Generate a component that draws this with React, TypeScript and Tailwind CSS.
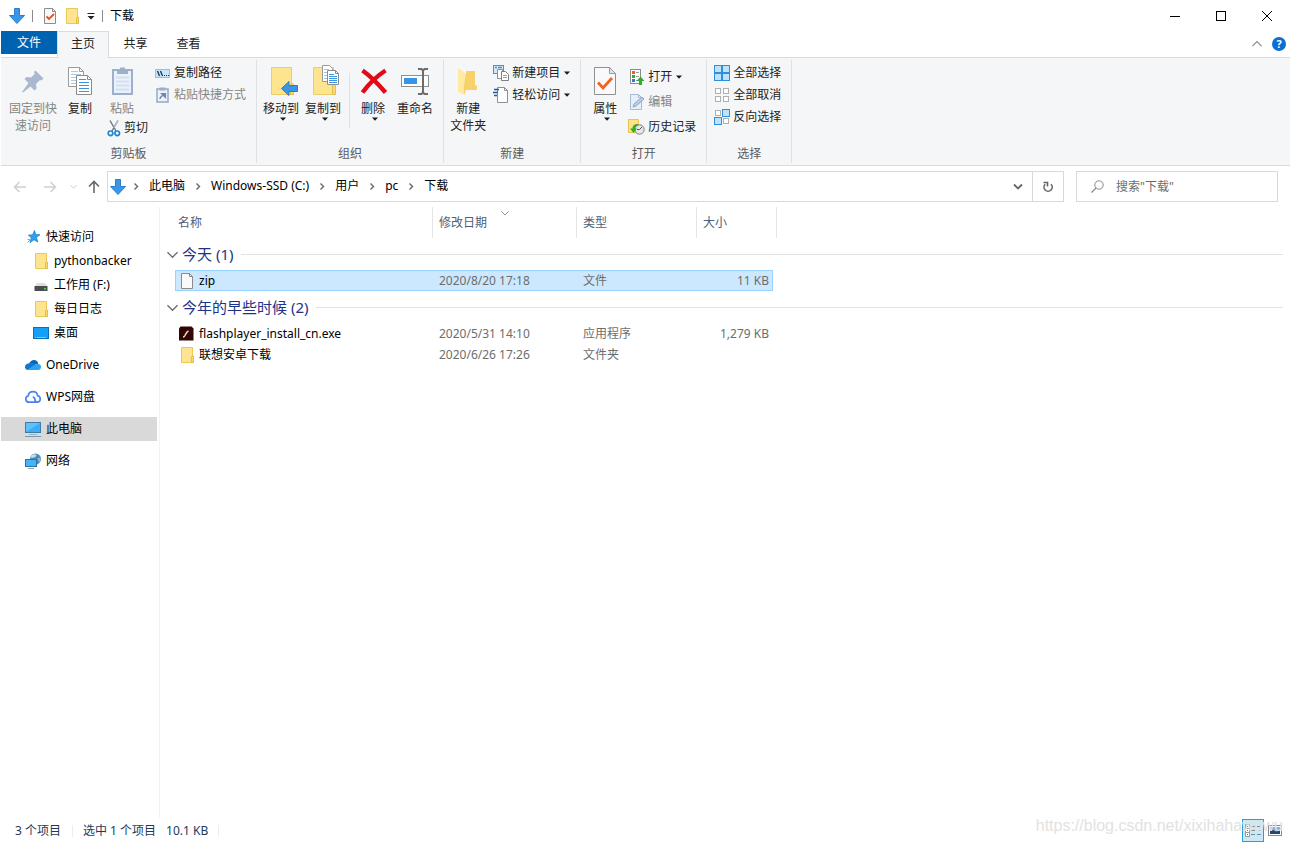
import type { ReactNode } from 'react';

/* ---------- icons ---------- */

function DownArrow() {
  return (
    <svg width="16" height="16" viewBox="0 0 16 16">
      <path d="M5.5 0.5h5v7h5L8 15.5 0.5 7.5h5z" fill="#3a96e8" stroke="#2b7fc9" />
    </svg>
  );
}

function FolderIcon() {
  return (
    <svg width="16" height="16" viewBox="0 0 16 16">
      <path d="M2.5 0.5h11v9h1v6h-12z" fill="#ffe48f" stroke="#ecc854" />
      <path d="M12.5 15.5V10l1-1h1v6.5z" fill="#f8d775" stroke="#e6bd45" />
    </svg>
  );
}

function FileIcon() {
  return (
    <svg width="16" height="16" viewBox="0 0 16 16">
      <path d="M2.5 0.5h8l3 3v12h-11z" fill="#fafafa" stroke="#8a8a8a" />
      <path d="M10.5 0.5v3h3" fill="none" stroke="#8a8a8a" />
    </svg>
  );
}

function CheckedPage({ small = false }: { small?: boolean }) {
  return small ? (
    <svg width="14" height="16" viewBox="0 0 14 16">
      <path d="M1.5 0.5h8l3 3v12h-11z" fill="#f8f8fa" stroke="#8c8c8c" />
      <path d="M9.5 0.5v3h3" fill="none" stroke="#8c8c8c" />
      <path d="M3.5 8.5l2.5 2.5 5-5" fill="none" stroke="#e8501c" strokeWidth="1.8" />
    </svg>
  ) : (
    <svg width="32" height="32" viewBox="0 0 32 32">
      <path d="M5.5 1.5h15l6 6v21h-21z" fill="#f9f9fb" stroke="#8f8f8f" />
      <path d="M20.5 1.5v6h6z" fill="#e4e4e8" stroke="#9a9a9a" />
      <path d="M9 16.500l5 5.500 9-10" fill="none" stroke="#f0641e" strokeWidth="2.800" />
    </svg>
  );
}

function PinIcon() {
  return (
    <svg width="32" height="32" viewBox="0 0 32 32">
      <path
        d="M18.500 4.500l8 8-2 2-1.500-.5-4 4 .5 4.500-2 2-4-4L6 26.500l-.8-.8L11.500 17l-4-4 2-2 4.500.5 4-4-1.200-1.500z"
        fill="#a9b8cf"
      />
    </svg>
  );
}

function CopyIcon() {
  return (
    <svg width="32" height="32" viewBox="0 0 32 32">
      <path d="M4.500 1.500h11l4 4v15h-15z" fill="#fff" stroke="#9a9a9a" />
      <path d="M15.500 1.500v4h4" fill="none" stroke="#9a9a9a" />
      <path d="M7 5.500h7M7 8.500h10M7 11.500h10M7 14.500h10M7 17.500h10" stroke="#a9cbea" />
      <path d="M12.500 9.500h11l4 4v15h-15z" fill="#fff" stroke="#8c8c8c" />
      <path d="M23.500 9.500v4h4" fill="none" stroke="#8c8c8c" />
      <path d="M15 13.500h7M15 16.500h10M15 19.500h10M15 22.500h10M15 25.500h10" stroke="#3b94dd" />
    </svg>
  );
}

function PasteIcon() {
  return (
    <svg width="32" height="32" viewBox="0 0 32 32">
      <rect x="7" y="4" width="19" height="24" fill="#eaf1fb" stroke="#9dafcb" strokeWidth="2" />
      <path d="M10 11.500h13M10 15.500h13M10 19.500h13M10 23.500h13" stroke="#d3dff1" strokeWidth="2" />
      <path d="M11 4h3V1.500h5V4h3v4H11z" fill="#9dafcb" />
    </svg>
  );
}

function CutIcon() {
  return (
    <svg width="14" height="17" viewBox="0 0 14 17">
      <path d="M3 0.500L9 11M11 0.500L5 11" stroke="#6d7b88" strokeWidth="1.500" />
      <path d="M7 8l4-7.500" stroke="#c3ccd4" />
      <circle cx="3.500" cy="13.300" r="2.300" fill="#fff" stroke="#1a86d8" strokeWidth="1.700" />
      <circle cx="10.200" cy="13.300" r="2.300" fill="#fff" stroke="#1a86d8" strokeWidth="1.700" />
    </svg>
  );
}

function PathIcon() {
  return (
    <svg width="16" height="16" viewBox="0 0 16 16">
      <rect x="0.500" y="4.500" width="14" height="8" fill="#c8e6fb" stroke="#8fc2ea" />
      <path d="M2.500 6l2 5M5.500 6l2 5" stroke="#15354f" strokeWidth="1.300" />
      <path d="M9 10.500h1M11 10.500h1M13 10.500h1" stroke="#15354f" />
    </svg>
  );
}

function ShortcutIcon() {
  return (
    <svg width="16" height="16" viewBox="0 0 16 16">
      <rect x="2" y="2" width="11" height="13" fill="#edf2fa" stroke="#9badc9" strokeWidth="1.600" />
      <path d="M4.500 0.500h6v3h-6z" fill="#9badc9" />
      <path d="M5 12c0-2 1-3 3-3.500M6.500 6.500h4v4z" stroke="#7088ad" strokeWidth="1.200" fill="#7088ad" />
    </svg>
  );
}

function BigFolder({ children }: { children: ReactNode }) {
  return (
    <svg width="32" height="32" viewBox="-1 0 32 32" className="overflow-visible">
      <path d="M5.500 1.500h20v17h2v10h-22z" fill="#fde48f" stroke="#edcd68" />
      <path d="M24.500 28.500V19l1.500-2 1.500 1.500v10z" fill="#f9d977" stroke="#e5bf4e" />
      {children}
    </svg>
  );
}

function MoveToIcon() {
  return (
    <BigFolder>
      <path d="M15.500 22.500l7.500-7v4h8.500v6H23v4z" fill="#3b97e4" stroke="#2a7cc5" />
    </BigFolder>
  );
}

function CopyToIcon() {
  return (
    <BigFolder>
      <path d="M14.500 -0.500h7l3 3v13h-10z" fill="#fff" stroke="#999" />
      <path d="M16 3.500h5M16 6.500h6M16 9.500h6M16 12.500h6" stroke="#9fc6ea" />
      <path d="M19.500 4.500h8l3 3v11h-11z" fill="#fff" stroke="#8c8c8c" />
      <path d="M27.500 4.500v3h3" fill="none" stroke="#8c8c8c" />
      <path d="M21 8.500h5M21 10.500h8M21 12.500h8M21 14.500h8M21 16.500h8" stroke="#3b94dd" />
    </BigFolder>
  );
}

function DeleteIcon() {
  return (
    <svg width="32" height="32" viewBox="0 0 32 32">
      <path d="M5.500 4.500C12 9 22 19 28.500 26.500M28.500 4.500C20 10 11 19 5.500 26.500" fill="none" stroke="#e20a17" strokeWidth="4.400" />
    </svg>
  );
}

function RenameIcon() {
  return (
    <svg width="32" height="32" viewBox="0 0 32 32">
      <rect x="2.500" y="9.500" width="27" height="11" fill="#fff" stroke="#8f8f8f" />
      <rect x="5" y="12" width="13" height="6" fill="#3595e6" />
      <path d="M24 4v23M19 3h3.500L24 4.500 25.500 3H29M19 28h3.500L24 26.500l1.500 1.500H29" fill="none" stroke="#6c6c6c" strokeWidth="2" />
    </svg>
  );
}

function NewFolderIcon() {
  return (
    <svg width="32" height="32" viewBox="0 0 32 32">
      <path d="M14 5h9v14l2 1v4H14z" fill="#f7d26b" />
      <path d="M6 2l8 6v14l-1 7-7-3z" fill="#ffe9a3" />
      <path d="M14 8v15l-2 6V20z" fill="#f5cf69" />
    </svg>
  );
}

function NewItemIcon() {
  return (
    <svg width="16" height="16" viewBox="0 0 16 16">
      <rect x="0.500" y="0.500" width="10" height="8" fill="#d4eafa" stroke="#6b8ba4" />
      <path d="M2 2.500h2M5 2.500h4" stroke="#3a96e0" strokeWidth="1.500" />
      <path d="M4.500 4.500h5v9h-5z" fill="#fff" stroke="#909090" />
      <path d="M8.500 6.500h4l3 3v6h-7z" fill="#fff" stroke="#808080" />
      <path d="M10 10.500h4M10 12.500h4" stroke="#69a9dd" />
    </svg>
  );
}

function EasyAccessIcon() {
  return (
    <svg width="16" height="16" viewBox="0 0 16 16">
      <path d="M4.500 0.500h7l3 3v12h-10z" fill="#fff" stroke="#8f8f8f" />
      <path d="M11.500 0.500v3h3" fill="none" stroke="#8f8f8f" />
      <path d="M1 2.500h5M0 5.500h5M1 8.500h3" stroke="#1c5fa8" strokeWidth="1.300" />
    </svg>
  );
}

function OpenIcon() {
  return (
    <svg width="16" height="16" viewBox="0 0 16 16">
      <rect x="1.500" y="0.500" width="10" height="14" fill="#fff" stroke="#8c8c8c" />
      <rect x="3" y="2" width="3" height="3" fill="#e8641b" />
      <rect x="3" y="6" width="3" height="3" fill="#3fa535" />
      <rect x="3" y="10" width="3" height="3" fill="#2b7cd0" />
      <path d="M7 3.500h3M7 7.500h3M7 11.500h2" stroke="#999" />
      <path d="M11.500 7.500l4 4.500H13v4h-3v-4H7.500z" fill="#2fae2f" />
    </svg>
  );
}

function EditIcon() {
  return (
    <svg width="16" height="16" viewBox="0 0 16 16">
      <path d="M1.500 0.500h8l3 3v12h-11z" fill="#e6eef9" stroke="#a9bad4" />
      <path d="M9.500 0.500v3h3" fill="none" stroke="#a9bad4" />
      <path d="M4 13l1-3 8-7 2 2-8 7z" fill="#bccce3" stroke="#8fa5c6" />
    </svg>
  );
}

function HistoryIcon() {
  return (
    <svg width="16" height="16" viewBox="1 0 16 16" className="overflow-visible">
      <path d="M0.500 0.500h10v13h-10z" fill="#fde286" stroke="#e9c44e" />
      <circle cx="11.500" cy="10.500" r="4.700" fill="#e6e6e6" stroke="#808080" />
      <path d="M11.500 10.500l2.500-2.500M11.500 10.500H9" stroke="#555" />
      <path d="M10 5C6 5 4.500 7 4.500 9.500H2L5.500 14l3.500-4.500H7C7 8 8 7 10 6.500z" fill="#2fae2f" />
    </svg>
  );
}

const selectCells = [
  [0.5, 0.5],
  [8.5, 0.5],
  [0.5, 8.5],
  [8.5, 8.5],
];

function SelectIcon({ filled }: { filled: boolean[] }) {
  return (
    <svg width="16" height="16" viewBox="0 0 16 16">
      {selectCells.map(([x, y], i) =>
        filled[i] ? (
          <rect key={i} x={x} y={y} width="7" height="7" fill="#bfe2fb" stroke="#2f8fdd" />
        ) : (
          <rect key={i} x={x + 1} y={y + 1} width="5" height="5" fill="#fff" stroke="#b0b0b0" />
        ),
      )}
    </svg>
  );
}

function StarIcon() {
  return (
    <svg width="16" height="16" viewBox="0 0 16 16">
      <path d="M9.500 1.500l1.200 4 4.300.2-3.500 2.600 1.200 4.700-3.700-2.300-4 3 1.300-4.700L3.500 6l4-.1z" fill="#2fa0ee" stroke="#1f86d2" strokeWidth="0.800" />
      <path d="M2.500 13.500l3-3M2.500 10.500h2.500" stroke="#5cb4f0" />
    </svg>
  );
}

function DriveIcon() {
  return (
    <svg width="16" height="16" viewBox="0 0 16 16">
      <path d="M4 6h8l2.500 4h-13z" fill="#dcdee0" />
      <rect x="1.500" y="9" width="13" height="5" rx="0.500" fill="#4a4e51" />
      <rect x="11" y="11" width="2" height="1.500" fill="#3ddc4a" />
    </svg>
  );
}

function DesktopIcon() {
  return (
    <svg width="16" height="16" viewBox="0 0 16 16">
      <rect x="0.500" y="2.500" width="15" height="11" fill="#12a0fb" stroke="#0c6db8" />
      <path d="M2 12.500h1M4 12.500h9" stroke="#7cc9ff" />
    </svg>
  );
}

function OneDriveIcon() {
  return (
    <svg width="16" height="16" viewBox="0 0 16 16">
      <path d="M4 7.500C4.500 4.500 7 3 9 3s4 1.500 4.200 4z" fill="#0a64b5" />
      <path d="M3.500 6.500C1.500 6.500 0 8 0 10s1.500 3 3 3l8-5.500C9 5.500 5.500 5.500 3.500 6.500z" fill="#0f79d1" />
      <path d="M10 7.500l3-.5c2 0 3 1.300 3 3s-1.300 3-3 3H3z" fill="#2aa4ea" />
    </svg>
  );
}

function WpsCloudIcon() {
  return (
    <svg width="16" height="16" viewBox="0 0 16 16">
      <path d="M10.500 13.200H4a3.200 3.200 0 0 1-.8-6.300C3.500 4.300 5.500 2.700 8 2.700s4.300 1.500 4.600 4A3.300 3.300 0 0 1 12.500 13.200c-1.800 0-2.500-1.200-2.500-2.500 0-1.700-1-2.500-2.300-2.500" fill="none" stroke="#4a82f2" strokeWidth="1.700" />
    </svg>
  );
}

function PcIcon() {
  return (
    <svg width="16" height="16" viewBox="0 0 16 16">
      <rect x="0.500" y="1.500" width="15" height="10" fill="#5fc0fc" stroke="#3b7ea8" />
      <path d="M1 11L15 2v9z" fill="#3faaf5" />
      <path d="M4 13.500h8" stroke="#9fb4c4" />
      <path d="M0 15.500h16" stroke="#7d97ad" />
    </svg>
  );
}

function NetworkIcon() {
  return (
    <svg width="16" height="16" viewBox="0 0 16 16">
      <circle cx="10.500" cy="6" r="5.500" fill="#4a8db8" />
      <path d="M6.500 2.200c2-1.400 3.500-1.200 4.500-.5s0 2-1.500 2.500S6.500 5 5.700 4.500z" fill="#c5dde9" />
      <path d="M12.500 5.500l2.800-1c.6 2 .2 3.500-1.300 5z" fill="#8dbad3" />
      <rect x="0.500" y="6.500" width="11" height="7" fill="#45b4fa" stroke="#2f6f9b" />
      <path d="M3 15.500h6" stroke="#8da5b6" />
    </svg>
  );
}

function FlashIcon() {
  return (
    <svg width="16" height="16" viewBox="0 0 16 16">
      <path d="M1.500 0.500h11l2 2v12H0v-12z" fill="#330503" />
      <path d="M9.500 5c-2 .5-2.500 2.500-3.500 4.500-.5.900-1 1.500-2 1.500" fill="none" stroke="#f2dede" strokeWidth="1.400" />
    </svg>
  );
}

function Caret() {
  return (
    <svg width="6" height="4" viewBox="0 0 6 4" className="shrink-0">
      <path d="M0 0.500h6L3 3.800z" fill="#1a1a1a" />
    </svg>
  );
}

function Chevron({ size = 11, color = '#6a6a6a' }: { size?: number; color?: string }) {
  return (
    <svg width={size} height={size} viewBox="0 0 12 12">
      <path d="M0.500 3.500L6 9l5.500-5.500" fill="none" stroke={color} strokeWidth="1.400" />
    </svg>
  );
}

/* ---------- ribbon ---------- */

function Group({ label, children, className }: { label: string; children: ReactNode; className: string }) {
  return (
    <section aria-label={label} className="flex flex-col border-r border-[#dfe1e3]">
      <div className={`flex h-[84px] items-start ${className}`}>{children}</div>
      <div className="text-center leading-[19px] text-[#5a5a5a]">{label}</div>
    </section>
  );
}

function BigButton({
  icon,
  lines,
  caret = false,
  disabled = false,
}: {
  icon: ReactNode;
  lines: string[];
  caret?: boolean;
  disabled?: boolean;
}) {
  return (
    <button
      type="button"
      disabled={disabled}
      className="flex flex-col items-center pt-1.5 whitespace-nowrap text-[#222] disabled:text-[#858585]"
    >
      <span className="-mx-1 mb-0.5">{icon}</span>
      {lines.map((line) => (
        <span key={line} className="leading-[17px]">
          {line}
        </span>
      ))}
      {caret && (
        <span className="pl-1">
          <Caret />
        </span>
      )}
    </button>
  );
}

function SmallButton({
  icon,
  label,
  caret = false,
  disabled = false,
  tall = false,
}: {
  icon: ReactNode;
  label: string;
  caret?: boolean;
  disabled?: boolean;
  tall?: boolean;
}) {
  return (
    <button
      type="button"
      disabled={disabled}
      className={`flex items-center gap-[3px] whitespace-nowrap text-[#222] disabled:text-[#858585] ${tall ? 'h-[25px]' : 'h-[22px]'}`}
    >
      {icon}
      <span>{label}</span>
      {caret && (
        <span className="pl-px">
          <Caret />
        </span>
      )}
    </button>
  );
}

function Ribbon() {
  return (
    <div className="flex border-y border-[#dadbdc] bg-[#f5f6f7] py-0.5">
      <Group label="剪贴板" className="pr-[10px] pl-2">
        <BigButton icon={<PinIcon />} lines={['固定到快', '速访问']} disabled />
        <div className="w-[11px]" />
        <BigButton icon={<CopyIcon />} lines={['复制']} />
        <div className="w-[15px]" />
        <div className="flex flex-col">
          <div className="flex pl-[3px]">
            <BigButton icon={<PasteIcon />} lines={['粘贴']} disabled />
          </div>
          <SmallButton icon={<CutIcon />} label="剪切" />
        </div>
        <div className="flex flex-col pt-0.5 pl-[7px]">
          <SmallButton icon={<PathIcon />} label="复制路径" />
          <SmallButton icon={<ShortcutIcon />} label="粘贴快捷方式" disabled />
        </div>
      </Group>
      <Group label="组织" className="gap-1.5 pr-[10px] pl-1.5">
        <BigButton icon={<MoveToIcon />} lines={['移动到']} caret />
        <BigButton icon={<CopyToIcon />} lines={['复制到']} caret />
        <div className="mt-[13px] mr-[5px] ml-0.5 h-[55px] w-px bg-[#dfe1e3]" />
        <div className="flex gap-3">
          <BigButton icon={<DeleteIcon />} lines={['删除']} caret />
          <BigButton icon={<RenameIcon />} lines={['重命名']} />
        </div>
      </Group>
      <Group label="新建" className="gap-[7px] pr-[10px] pl-1.5">
        <BigButton icon={<NewFolderIcon />} lines={['新建', '文件夹']} />
        <div className="flex flex-col pt-0.5">
          <SmallButton icon={<NewItemIcon />} label="新建项目" caret />
          <SmallButton icon={<EasyAccessIcon />} label="轻松访问" caret />
        </div>
      </Group>
      <Group label="打开" className="gap-3 pr-[10px] pl-3">
        <BigButton icon={<CheckedPage />} lines={['属性']} caret />
        <div className="flex flex-col pt-1">
          <SmallButton icon={<OpenIcon />} label="打开" caret tall />
          <SmallButton icon={<EditIcon />} label="编辑" disabled tall />
          <SmallButton icon={<HistoryIcon />} label="历史记录" tall />
        </div>
      </Group>
      <Group label="选择" className="pr-[10px] pl-[7px]">
        <div className="flex flex-col pt-0.5">
          <SmallButton icon={<SelectIcon filled={[true, true, true, true]} />} label="全部选择" />
          <SmallButton icon={<SelectIcon filled={[false, false, false, false]} />} label="全部取消" />
          <SmallButton icon={<SelectIcon filled={[false, true, true, false]} />} label="反向选择" />
        </div>
      </Group>
    </div>
  );
}

/* ---------- title bar and tabs ---------- */

function TitleBar() {
  return (
    <header className="flex h-[31px] items-center">
      <div className="flex items-center pl-2">
        <DownArrow />
        <div className="mr-[10px] ml-[7px] h-3 w-px bg-[#8a8a8a]" />
        <button type="button" aria-label="属性">
          <CheckedPage small />
        </button>
        <button type="button" aria-label="新建文件夹" className="ml-[7px]">
          <FolderIcon />
        </button>
        <button type="button" aria-label="自定义快速访问工具栏" className="ml-[7px]">
          <svg width="8" height="8" viewBox="0 0 8 8">
            <path d="M0.500 1.500h7" stroke="#222" />
            <path d="M0.500 4h7L4 7.500z" fill="#222" />
          </svg>
        </button>
        <div className="mr-[7px] ml-[7px] h-3 w-px bg-[#8a8a8a]" />
        <h1>下载</h1>
      </div>
      <div className="ml-auto flex h-full">
        <button type="button" aria-label="最小化" className="flex w-[46px] items-center justify-center">
          <svg width="10" height="10" viewBox="0 0 10 10">
            <path d="M0 5.500h10" stroke="#000" />
          </svg>
        </button>
        <button type="button" aria-label="最大化" className="flex w-[46px] items-center justify-center">
          <svg width="10" height="10" viewBox="0 0 10 10">
            <rect x="0.500" y="0.500" width="9" height="9" fill="none" stroke="#000" />
          </svg>
        </button>
        <button type="button" aria-label="关闭" className="flex w-[46px] items-center justify-center">
          <svg width="10" height="10" viewBox="0 0 10 10">
            <path d="M0 0l10 10M10 0L0 10" stroke="#000" />
          </svg>
        </button>
      </div>
    </header>
  );
}

function Tabs() {
  return (
    <nav className="flex h-[26px] items-start">
      <button type="button" className="h-[23px] w-14 bg-[#0063b1] text-white">
        文件
      </button>
      <button
        type="button"
        className="z-10 h-[27px] w-[52px] border border-b-0 border-[#dadbdc] bg-[#f5f6f7] pb-0.5 text-[#222]"
      >
        主页
      </button>
      <button type="button" className="h-[25px] w-[53px] text-[#222]">
        共享
      </button>
      <button type="button" className="h-[25px] w-[53px] text-[#222]">
        查看
      </button>
      <div className="ml-auto flex h-full items-center gap-[10px] pr-1">
        <button type="button" aria-label="最小化功能区" className="rotate-180">
          <Chevron size={10} color="#8a8a8a" />
        </button>
        <button
          type="button"
          className="flex size-[14px] items-center justify-center rounded-full bg-[#0a6fd0] text-[11px] font-bold text-white"
        >
          ?
        </button>
      </div>
    </nav>
  );
}

/* ---------- address bar ---------- */

const crumbs = ['此电脑', 'Windows-SSD (C:)', '用户', 'pc', '下载'];

function NavArrow({ label, color, d }: { label: string; color: string; d: string }) {
  return (
    <button type="button" aria-label={label}>
      <svg width="14" height="14" viewBox="0 0 14 14">
        <path d={d} fill="none" stroke={color} strokeWidth="1.600" />
      </svg>
    </button>
  );
}

function AddressBar() {
  return (
    <div className="flex h-[41px] items-center pr-3">
      <div className="flex items-center pl-3">
        <NavArrow label="后退" color="#d0d0d0" d="M13 7H1.500M6.500 2L1.500 7l5 5" />
        <div className="w-4" />
        <NavArrow label="前进" color="#d0d0d0" d="M1 7h11.500M7.500 2l5 5-5 5" />
        <button type="button" aria-label="最近浏览的位置" className="mr-[10px] ml-[13px]">
          <Chevron size={7} color="#c4c4c4" />
        </button>
        <NavArrow label="上移" color="#686868" d="M7 13V1.500M2 6.500l5-5 5 5" />
      </div>
      <div className="ml-[6px] flex h-[31px] flex-1 border border-[#d9d9d9]">
        <ol className="flex flex-1 items-center pl-0.5">
          <li className="flex">
            <DownArrow />
          </li>
          {crumbs.map((crumb, i) => (
            <li key={crumb} className="flex items-center">
              <svg
                width="9"
                height="9"
                viewBox="0 0 9 9"
                className={i === 0 ? 'mr-2 ml-1.5' : 'mr-2 ml-[9px]'}
              >
                <path d="M2.500 1.500l3 3-3 3" fill="none" stroke="#666" strokeWidth="1.400" />
              </svg>
              <a href="#" className="pb-px">
                {crumb}
              </a>
            </li>
          ))}
        </ol>
        <button type="button" aria-label="以前的位置" className="flex w-7 items-center justify-center">
          <svg width="10" height="8" viewBox="0 0 10 8">
            <path d="M1 1.500l4 4 4-4" fill="none" stroke="#666" strokeWidth="1.800" />
          </svg>
        </button>
        <button
          type="button"
          aria-label="刷新"
          className="flex w-[31px] items-center justify-center border-l border-[#d9d9d9]"
        >
          <svg width="12" height="12" viewBox="0 0 12 12">
            <path d="M9 3.200A4.100 4.100 0 1 1 3.200 3.200" fill="none" stroke="#666" strokeWidth="1.600" />
            <path d="M1.500 1.500h4v4" fill="none" stroke="#666" strokeWidth="1.600" />
          </svg>
        </button>
      </div>
      <div className="ml-3 flex h-[31px] w-[202px] items-center border border-[#d9d9d9] pl-[14px]">
        <svg width="13" height="13" viewBox="0 0 13 13" className="shrink-0">
          <circle cx="8" cy="5" r="4.200" fill="none" stroke="#8a8a8a" />
          <path d="M5 8L0.500 12.500" stroke="#8a8a8a" strokeWidth="1.200" />
        </svg>
        <input
          type="text"
          aria-label="搜索"
          placeholder={'搜索"下载"'}
          className="ml-3 w-full min-w-0 bg-transparent outline-none placeholder:text-[#6d6d6d]"
        />
      </div>
    </div>
  );
}

/* ---------- navigation pane ---------- */

function NavItem({
  icon,
  label,
  child = false,
  selected = false,
}: {
  icon: ReactNode;
  label: string;
  child?: boolean;
  selected?: boolean;
}) {
  return (
    <a
      href="#"
      className={`flex h-6 items-center gap-[5px] ${child ? 'pl-8' : 'pl-6'} ${selected ? 'bg-[#d9d9d9]' : ''}`}
    >
      {icon}
      <span>{label}</span>
    </a>
  );
}

function NavPane() {
  return (
    <nav className="flex w-[159px] shrink-0 flex-col gap-2 border-r border-[#f2f2f2] pt-[18px] pr-0.5">
      <div>
        <NavItem icon={<StarIcon />} label="快速访问" />
        <NavItem icon={<FolderIcon />} label="pythonbacker" child />
        <NavItem icon={<DriveIcon />} label="工作用 (F:)" child />
        <NavItem icon={<FolderIcon />} label="每日日志" child />
        <NavItem icon={<DesktopIcon />} label="桌面" child />
      </div>
      <NavItem icon={<OneDriveIcon />} label="OneDrive" />
      <NavItem icon={<WpsCloudIcon />} label="WPS网盘" />
      <NavItem icon={<PcIcon />} label="此电脑" selected />
      <NavItem icon={<NetworkIcon />} label="网络" />
    </nav>
  );
}

/* ---------- file list ---------- */

interface FileEntry {
  icon: ReactNode;
  name: string;
  date: string;
  type: string;
  size?: string;
  selected?: boolean;
}

const groups: { title: string; files: FileEntry[] }[] = [
  {
    title: '今天 (1)',
    files: [{ icon: <FileIcon />, name: 'zip', date: '2020/8/20 17:18', type: '文件', size: '11 KB', selected: true }],
  },
  {
    title: '今年的早些时候 (2)',
    files: [
      { icon: <FlashIcon />, name: 'flashplayer_install_cn.exe', date: '2020/5/31 14:10', type: '应用程序', size: '1,279 KB' },
      { icon: <FolderIcon />, name: '联想安卓下载', date: '2020/6/26 17:26', type: '文件夹' },
    ],
  },
];

function FileRow({ file }: { file: FileEntry }) {
  const edge = file.selected ? 'border-[#99d1ff] bg-[#cce8ff]' : 'border-transparent';
  return (
    <tr className="h-[21px] text-[#6d6d6d]">
      <td />
      <td className={`border-y border-l p-0 ${edge}`}>
        <div className="flex items-center gap-1 pl-[3px] text-black">
          {file.icon}
          <span>{file.name}</span>
        </div>
      </td>
      <td className={`border-y p-0 pl-[7px] ${edge}`}>{file.date}</td>
      <td className={`border-y p-0 pl-[7px] ${edge}`}>{file.type}</td>
      <td className={`border-y border-r p-0 pr-[3px] text-right ${edge}`}>{file.size}</td>
      <td colSpan={2} />
    </tr>
  );
}

function FileList() {
  return (
    <main className="min-w-0 flex-1 pr-[7px]">
      <table className="w-full table-fixed border-separate border-spacing-0 leading-4">
        <colgroup>
          <col className="w-[15px]" />
          <col className="w-[257px]" />
          <col className="w-[144px]" />
          <col className="w-[120px]" />
          <col className="w-[77px]" />
          <col className="w-1" />
          <col />
        </colgroup>
        <thead>
          <tr className="h-[31px] text-left text-[#4c607a]">
            <td />
            <th className="p-0 pl-[3px] font-normal">名称</th>
            <th className="relative border-l border-[#e5e5e5] p-0 pl-1.5 font-normal">
              修改日期
              <span className="absolute inset-x-0 top-0.5 flex justify-center">
                <Chevron size={8} color="#8a8a8a" />
              </span>
            </th>
            <th className="border-l border-[#e5e5e5] p-0 pl-1.5 font-normal">类型</th>
            <th className="border-l border-[#e5e5e5] p-0 pl-1.5 font-normal">大小</th>
            <td className="border-r border-[#e5e5e5] p-0" />
            <td />
          </tr>
        </thead>
        {groups.map((group) => (
          <tbody key={group.title}>
            <tr className="h-8">
              <td colSpan={7} className="p-0 pl-[7px]">
                <div className="flex items-center text-[15px] leading-5 text-[#1e3287]">
                  <button type="button" aria-label="折叠组" className="mr-1">
                    <Chevron />
                  </button>
                  <span>{group.title}</span>
                  <span className="ml-2 h-px flex-1 bg-[#e2e2e2]" />
                </div>
              </td>
            </tr>
            {group.files.map((file) => (
              <FileRow key={file.name} file={file} />
            ))}
          </tbody>
        ))}
      </table>
    </main>
  );
}

/* ---------- status bar ---------- */

function StatusBar() {
  return (
    <footer className="relative flex h-[25px] items-center pr-2 pl-[14px] text-[#1e395b]">
      <span>3 个项目</span>
      <span className="mr-[10px] ml-[11px] h-3 w-px bg-[#ececec]" />
      <span>选中 1 个项目</span>
      <span className="ml-[10px]">10.1 KB</span>
      <span className="ml-[10px] h-3 w-px bg-[#ececec]" />
      <div className="ml-auto flex items-center gap-1">
        <button
          type="button"
          aria-label="详细信息"
          className="flex h-[23px] w-[22px] items-center justify-center border border-[#26a0da] bg-[#cbe8f6]"
        >
          <svg width="16" height="14" viewBox="0 0 16 14">
            <path d="M0.500 0.500h4v4h-4zM0.500 4.500h4v4h-4zM0.500 8.500h4v4h-4z" fill="#fff" stroke="#999" />
            <path d="M2 2.500h1M2 6.500h1" stroke="#3a7fc0" />
            <path d="M2 10.500h1" stroke="#e03030" />
            <path d="M6 2.500h4M12 2.500h4M6 6.500h4M12 6.500h4M6 10.500h4M12 10.500h4" stroke="#7a8a92" />
          </svg>
        </button>
        <button type="button" aria-label="大缩略图">
          <svg width="14" height="11" viewBox="0 0 14 11">
            <rect x="0.500" y="0.500" width="13" height="10" fill="#fff" stroke="#8a8a8a" />
            <rect x="2" y="2" width="10" height="7" fill="#79b5e8" />
            <path d="M2 6l3-1 3 1.500 4-1V9H2z" fill="#23486b" />
          </svg>
        </button>
      </div>
      <span className="pointer-events-none absolute top-0 right-[7px] font-['Liberation_Sans',sans-serif] text-[16px] text-[#e2e2e2]">
        https://blog.csdn.net/xixihahawuwu
      </span>
    </footer>
  );
}

export default function App() {
  return (
    <div className="flex min-h-screen flex-col bg-white px-px font-['Noto_Sans','Noto_Sans_CJK_SC',sans-serif] text-[12px] leading-4 text-black">
      <TitleBar />
      <Tabs />
      <Ribbon />
      <AddressBar />
      <div className="flex flex-1">
        <NavPane />
        <FileList />
      </div>
      <StatusBar />
    </div>
  );
}
